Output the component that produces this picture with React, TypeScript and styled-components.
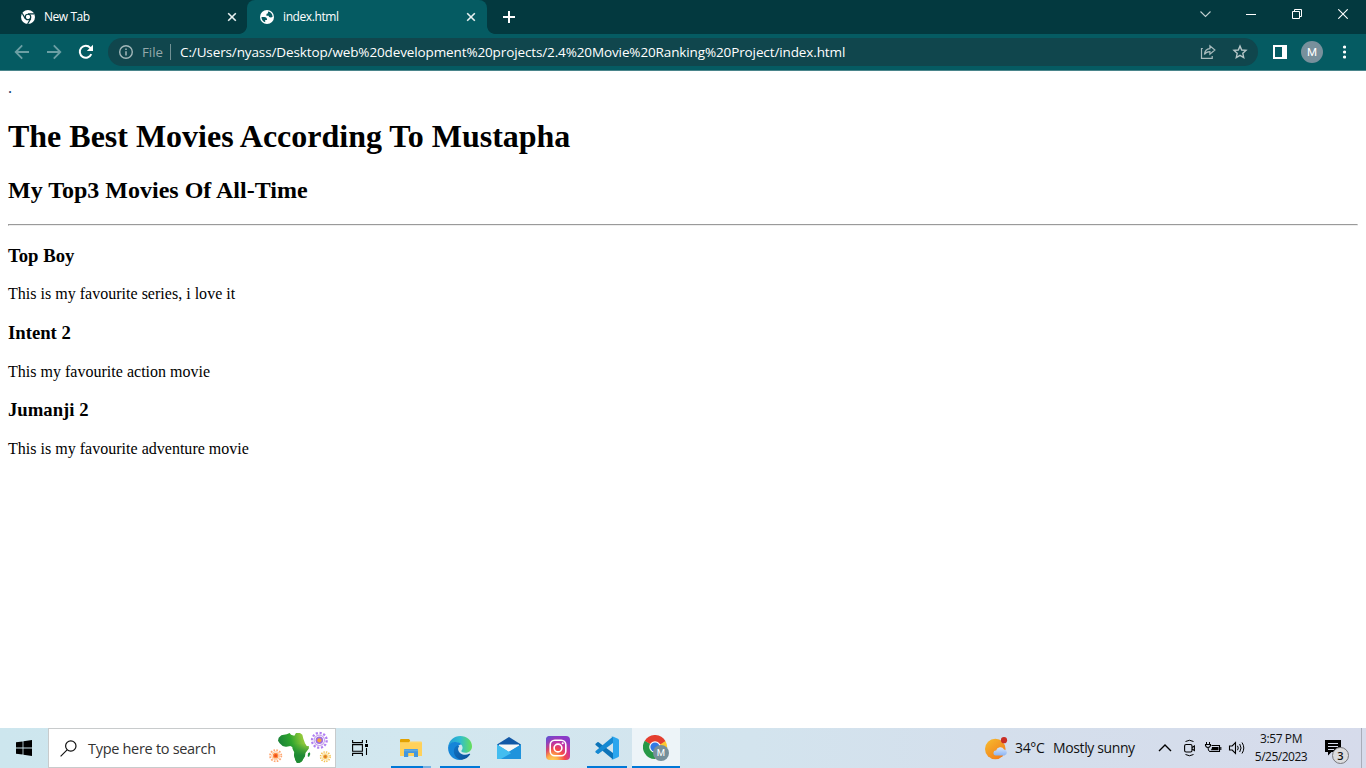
import React from 'react';
import styled, { createGlobalStyle } from 'styled-components';

const GlobalStyle = createGlobalStyle`
  html, body { margin: 0; padding: 0; background: #fff; overflow: hidden; }
  svg { display: block; flex: none; }
`;

const UI_FONT = `'Open Sans', 'Noto Sans', sans-serif`;

const Screen = styled.div`
  width: 1366px;
  height: 768px;
  display: flex;
  flex-direction: column;
  overflow: hidden;
`;

const Label = styled.span<{ $size: number; $spacing?: number; $color?: string; $width?: number; $weight?: number }>`
  font-family: ${UI_FONT};
  font-size: ${p => p.$size}px;
  letter-spacing: ${p => p.$spacing ?? 0}px;
  color: ${p => p.$color ?? '#fff'};
  font-weight: ${p => p.$weight ?? 400};
  width: ${p => (p.$width ? `${p.$width}px` : 'auto')};
  flex: none;
  white-space: nowrap;
  line-height: 18px;
`;

/* Browser chrome */

const TabStrip = styled.div`
  height: 34px;
  display: flex;
  background: #03393f;
`;

const Tab = styled.div<{ $width: number; $padLeft: number; $active?: boolean }>`
  position: relative;
  box-sizing: border-box;
  width: ${p => p.$width}px;
  height: 34px;
  padding: 0 ${p => (p.$active ? 11 : 10)}px 0 ${p => p.$padLeft}px;
  display: flex;
  align-items: center;
  background: ${p => (p.$active ? '#055b62' : 'transparent')};
  border-radius: 8px 8px 0 0;

  &::before,
  &::after {
    content: '';
    display: ${p => (p.$active ? 'block' : 'none')};
    position: absolute;
    bottom: 0;
    width: 8px;
    height: 8px;
  }
  &::before {
    left: -8px;
    background: radial-gradient(circle at 0 0, transparent 7.5px, #055b62 8.2px);
  }
  &::after {
    right: -8px;
    background: radial-gradient(circle at 8px 0, transparent 7.5px, #055b62 8.2px);
  }
`;

const TabTitle = styled.div<{ $gap: number }>`
  flex: 1;
  display: flex;
  padding-left: ${p => p.$gap}px;
`;

const NewTabButton = styled.div`
  width: 44px;
  height: 34px;
  display: flex;
  align-items: center;
  justify-content: center;
`;

const WindowControls = styled.div`
  margin-left: auto;
  height: 28px;
  display: flex;
`;

const WindowButton = styled.div`
  width: 46px;
  height: 28px;
  display: flex;
  align-items: center;
  justify-content: center;
`;

const Toolbar = styled.div`
  box-sizing: border-box;
  height: 37px;
  display: flex;
  align-items: center;
  background: #055b62;
  border-bottom: 1px solid #4a858b;
`;

const NavButton = styled.div<{ $width: number }>`
  width: ${p => p.$width}px;
  height: 36px;
  flex: none;
  display: flex;
  align-items: center;
  justify-content: center;
`;

const Gap = styled.div<{ $width: number }>`
  width: ${p => p.$width}px;
  flex: none;
`;

const Omnibox = styled.div`
  box-sizing: border-box;
  width: 1150px;
  height: 28px;
  padding: 0 10px 0 11px;
  display: flex;
  align-items: center;
  border-radius: 14px;
  background: #10464d;
`;

const OmniDivider = styled.div`
  width: 1px;
  height: 16px;
  margin: 0 9px 0 0;
  background: #719194;
`;

const OmniActions = styled.div`
  margin-left: auto;
  display: flex;
  gap: 16px;
`;

const Avatar = styled.div`
  width: 22px;
  height: 22px;
  flex: none;
  border-radius: 50%;
  display: flex;
  align-items: center;
  justify-content: center;
  background: #78909c;
  color: #fff;
  font: 400 11.5px Roboto, sans-serif;
`;

/* Document */

const Page = styled.main`
  flex: 1;
  min-height: 0;
  padding: 8px;
  background: #fff;
  color: #000;
  font-family: 'Liberation Serif', serif;
  font-size: 16px;
  overflow: hidden;
`;

const Dot = styled.div`
  height: 18px;
  line-height: 18px;
  color: #123a6b;
`;

const Title = styled.h1`
  margin: 21.44px 0;
  font-size: 32px;
  letter-spacing: -0.01px;
`;

const Subtitle = styled.h2`
  margin: 19.92px 0;
  font-size: 24px;
`;

const Rule = styled.hr`
  margin: 0;
  border: 1px solid;
  border-color: #9a9a9a #eeeeee #eeeeee #9a9a9a;
`;

const MovieName = styled.h3`
  margin: 18.72px 0;
  font-size: 18.72px;
`;

const MovieNote = styled.p`
  margin: 16px 0;
  letter-spacing: 0.015px;
`;

/* Taskbar */

const Taskbar = styled.footer`
  height: 40px;
  flex: none;
  display: flex;
  background: linear-gradient(90deg, #cde6ee 0%, #d2e7ef 30%, #d3e4ee 55%, #d4dfec 72%, #d6dbeb 100%);
`;

const TaskSlot = styled.div<{ $width: number; $active?: boolean }>`
  box-sizing: border-box;
  position: relative;
  width: ${p => p.$width}px;
  height: 40px;
  margin-left: ${p => (p.$active ? 1 : 0)}px;
  flex: none;
  display: flex;
  align-items: center;
  justify-content: center;
  background: ${p => (p.$active ? '#edf4f8' : 'transparent')};
`;

const Running = styled.div<{ $width: number; $split?: boolean }>`
  position: absolute;
  bottom: 0;
  width: ${p => p.$width}px;
  height: 2px;
  background: ${p => (p.$split ? 'linear-gradient(90deg, #0078d7 32px, #76b1e3 32px)' : '#0078d7')};
`;

const SearchBox = styled.div`
  box-sizing: border-box;
  width: 288px;
  height: 40px;
  padding: 0 2px 0 11px;
  display: flex;
  align-items: center;
  border: 1px solid #c8cbcc;
  background: #fff;
`;

const SearchHint = styled.div`
  display: flex;
  padding: 2px 0 0 11px;
`;

const SearchArt = styled.div`
  margin-left: auto;
`;

const Apps = styled.div`
  margin-left: 2px;
  display: flex;
`;

const Tray = styled.div`
  margin-left: auto;
  display: flex;
  align-items: center;
`;

const Weather = styled.div`
  width: 173px;
  display: flex;
  align-items: center;
`;

const TrayIcons = styled.div`
  width: 91px;
  display: flex;
  align-items: center;
`;

const Clock = styled.div`
  width: 64px;
  height: 36px;
  display: flex;
  flex-direction: column;
  align-items: center;
`;

const Notifications = styled.div`
  position: relative;
  width: 48px;
  height: 40px;
`;

const Bubble = styled.div`
  padding: 12px 0 0 11px;
`;

const Badge = styled.div`
  position: absolute;
  left: 19px;
  top: 19px;
  box-sizing: border-box;
  width: 17px;
  height: 17px;
  border: 1px solid #77777b;
  border-radius: 50%;
  display: flex;
  align-items: center;
  justify-content: center;
  background: #dcdcde;
  color: #111;
  font: 600 11px/14px ${UI_FONT};
`;

const ShowDesktop = styled.div`
  box-sizing: border-box;
  width: 5px;
  height: 40px;
  border-left: 1px solid #a9adb9;
`;

/* Icons */

const ChromeMono = () => (
  <svg width="14" height="14" viewBox="0 0 14 14">
    <circle cx="7" cy="7" r="7" fill="#fff" />
    <circle cx="7" cy="7" r="2.75" fill="none" stroke="#03393f" strokeWidth="1.2" />
    <path d="M7 3.900h6.200M4.300 8.600 1.200 3.300M9.700 8.600 6.600 14" fill="none" stroke="#03393f" strokeWidth="1.2" />
  </svg>
);

const Globe = () => (
  <svg width="14" height="14" viewBox="0 0 14 14">
    <circle cx="7" cy="7" r="7" fill="#fff" />
    <path
      d="M1.500 7h2.700c2 0 3 .9 2.800 3H5.200v2.300A5.600 5.600 0 0 1 1.500 7zM8 1.500a5.600 5.600 0 0 1 4.600 5.200c-.5.500-1 .7-1.900.7-1.300 0-2-.5-2-1.700H6.400c-.2-1.700.4-2.500 1.700-2.500 0-.7-.3-1-.1-1.700z"
      fill="#055b62"
    />
  </svg>
);

const CloseGlyph = () => (
  <svg width="10" height="10" viewBox="0 0 10 10">
    <path d="M1.200 1.200 8.800 8.800M8.800 1.200 1.200 8.800" stroke="#e9f1f1" strokeWidth="1.600" />
  </svg>
);

const Plus = () => (
  <svg width="12" height="12" viewBox="0 0 12 12">
    <path d="M6 0v12M0 6h12" stroke="#fff" strokeWidth="2" />
  </svg>
);

const Arrow = ({ flip }: { flip?: boolean }) => (
  <svg width="16" height="16" viewBox="0 0 16 16">
    <path
      transform={flip ? 'translate(16 0) scale(-1 1)' : undefined}
      d="M15 8H2M8.200 1.400 1.700 8l6.500 6.600"
      fill="none"
      stroke="#6c9fa4"
      strokeWidth="1.800"
    />
  </svg>
);

const Reload = () => (
  <svg width="16" height="16" viewBox="0 0 16 16">
    <path d="M13.300 10.200A6 6 0 1 1 12.300 3.800L14 5.500" fill="none" stroke="#fff" strokeWidth="2" />
    <path d="M15 .8V7H8.800z" fill="#fff" />
  </svg>
);

const Info = () => (
  <svg width="14" height="14" viewBox="0 0 14 14">
    <circle cx="7" cy="7" r="6.300" fill="none" stroke="#a3b8ba" strokeWidth="1.400" />
    <path d="M7 6.200v4.300M7 3.400v1.500" stroke="#a3b8ba" strokeWidth="1.500" />
  </svg>
);

const Share = () => (
  <svg width="16" height="15" viewBox="0 0 16 15" fill="none" stroke="#a9bbbd" strokeWidth="1.200">
    <path d="M2.800 4.500H1.500v9.800h10.700V12" />
    <path d="M4.400 10.500c.4-3.800 2.400-5.700 5.500-5.900V1.700l5 4.300-5 4.300V7.700c-2.500 0-4.200.8-5.500 2.800z" />
  </svg>
);

const Star = () => (
  <svg width="16" height="16" viewBox="0 0 16 16">
    <path
      d="M8 2.100 9.700 6l4.300.4-3.200 2.900.9 4.200L8 11.300l-3.700 2.200.9-4.200L2 6.400 6.300 6z"
      fill="none"
      stroke="#b7c6c8"
      strokeWidth="1.400"
    />
  </svg>
);

const SidePanel = () => (
  <svg width="14" height="14" viewBox="0 0 14 14">
    <path d="M0 0h14v14H0zM2 2v10h7V2z" fill="#fff" fillRule="evenodd" />
  </svg>
);

const Kebab = () => (
  <svg width="4" height="14" viewBox="0 0 4 14" fill="#fff">
    <circle cx="2.500" cy="2" r="1.600" />
    <circle cx="2.500" cy="7" r="1.600" />
    <circle cx="2.500" cy="12" r="1.600" />
  </svg>
);

const ChevronDown = () => (
  <svg width="11" height="8" viewBox="0 0 11 8">
    <path d="M.5 1.500l5 5 5-5" fill="none" stroke="#c2d0d1" strokeWidth="1.100" />
  </svg>
);

const Minimize = () => (
  <svg width="10" height="10" viewBox="0 0 10 10">
    <path d="M0 5.500h10" stroke="#fff" />
  </svg>
);

const Restore = () => (
  <svg width="10" height="10" viewBox="0 0 10 10" fill="none" stroke="#fff">
    <path d="M.5 2.500h7v7h-7zM2.500 2.500v-2h7v7h-2" />
  </svg>
);

const CloseWindow = () => (
  <svg width="10" height="10" viewBox="0 0 10 10">
    <path d="M.3.300l9.400 9.400M9.700.300l-9.400 9.400" stroke="#fff" strokeWidth="1.100" />
  </svg>
);

const WindowsLogo = () => (
  <svg width="16" height="16" viewBox="0 0 16 16" fill="#000">
    <path d="M0 2.300 6.600 1.400v6.200H0zM7.400 1.300 16 0v7.600H7.400zM0 8.400h6.600v6.200L0 13.700zM7.400 8.400H16V16l-8.600-1.300z" />
  </svg>
);

const Magnifier = () => (
  <svg width="17" height="17" viewBox="0 0 17 17" fill="none" stroke="#111" strokeWidth="1.200">
    <circle cx="10.800" cy="6" r="5.200" />
    <path d="M7.100 9.800.6 16.300" />
  </svg>
);

type FlowerProps = { cx: number; cy: number; r: number; ray: string; petal: string; core: string };

const Flower = ({ cx, cy, r, ray, petal, core }: FlowerProps) => (
  <g>
    <circle cx={cx} cy={cy} r={r * 0.85} fill="none" stroke={ray} strokeWidth={r * 0.26} strokeDasharray={`${r * 0.25} ${r * 0.195}`} />
    <circle cx={cx} cy={cy} r={r * 0.6} fill="none" stroke={petal} strokeWidth={r * 0.13} opacity=".6" />
    <circle cx={cx} cy={cy} r={r * 0.43} fill={petal} />
    <circle cx={cx} cy={cy} r={r * 0.24} fill={core} />
  </g>
);

const AfricaArt = () => (
  <svg width="66" height="38" viewBox="33 27 198 114">
    <defs>
      <linearGradient id="africa" x1="0" y1="0.5" x2="1" y2="0.2">
        <stop offset="0" stopColor="#157a3a" />
        <stop offset=".45" stopColor="#2fa52e" />
        <stop offset=".8" stopColor="#8fc83a" />
      </linearGradient>
      <linearGradient id="africaShade" x1="0" y1="0" x2="0" y2="1">
        <stop offset=".35" stopColor="#1f8f35" stopOpacity="0" />
        <stop offset=".75" stopColor="#1f8a34" />
      </linearGradient>
    </defs>
    {['url(#africa)', 'url(#africaShade)'].map(fill => (
      <path
        key={fill}
        fill={fill}
        d="M76 46l16-3 9-4 4 5 10 3 5-8h12l7 5 3 12 5 14 5 8 7 1-1 7-10 13-1 10-5 7-4 8-7 4-8 1-5-9-4-14 1-9-5-10-1-6-6-3-13 2-10-2-9-8-5-8 2-9z"
      />
    ))}
    <path d="M156 100l5-3 2 5-4 9-4-2z" fill="#1f9138" />
    <Flower cx={59} cy={107} r={20} ray="#ffa56f" petal="#ff9142" core="#f0501e" />
    <Flower cx={190} cy={61} r={26} ray="#b07ff2" petal="#a06be0" core="#f5a33c" />
    <Flower cx={208} cy={110} r={17} ray="#f3c14c" petal="#f6b93a" core="#d9782c" />
  </svg>
);

const TaskView = () => (
  <svg width="16" height="16" viewBox="0 0 16 16" fill="none" stroke="#000" strokeWidth="1.100">
    <path d="M.6 0v2.600h9.800V0M.6 16v-2.600h9.800V16M.6 4.600h9.800v6.700H.6zM14.500 0v3M14.500 8v7" />
    <path d="M13 4h3v3h-3z" fill="#000" stroke="none" />
  </svg>
);

const Explorer = () => (
  <svg width="22" height="19" viewBox="0 0 22 19">
    <path d="M0 2h10v.5h11a1 1 0 0 1 1 1v13.500H0z" fill="#ffd667" />
    <path d="M0 1.200Q0 0 1 0h8l1.200 1.500L9 3.300H0z" fill="#e2a100" />
    <path d="M0 4h22v13H0z" fill="#ffd15a" />
    <path d="M4 11q0-1 1-1h12q1 0 1 1v7h-4v-4H8.200v4H4z" fill="#4397dd" />
    <path d="M4 10.500h14v1.800H4z" fill="#5fa9df" />
  </svg>
);

const Edge = () => (
  <svg width="24" height="24" viewBox="0 0 24 24">
    <defs>
      <linearGradient id="edgeTop" x1="0" y1=".5" x2="1" y2=".5">
        <stop offset="0" stopColor="#229ad8" />
        <stop offset=".5" stopColor="#30bdcf" />
        <stop offset="1" stopColor="#67df58" />
      </linearGradient>
      <linearGradient id="edgeLow" x1="0" y1="0" x2="1" y2="1">
        <stop offset="0" stopColor="#1075c5" />
        <stop offset="1" stopColor="#0c4f98" />
      </linearGradient>
    </defs>
    <path d="M.2 10.600C1 4.500 6 0 12.200 0 19 0 24 4.700 24 10.200c0 3.900-2.900 6.600-6.600 6.600-2.400 0-4.100-.8-4.100-1.700 0-.6 1.300-1.100 1.300-3.300 0-3-3-5.300-6.700-5.300-3.500 0-6.300 1.700-7.700 4.100z" fill="url(#edgeTop)" />
    <path d="M.1 11.500C.4 8 4 6 7.700 6c2.600 0 4.800 1 5.900 2.400-3 0-4.900 2.200-4.900 5.200 0 4.700 4 8.200 8.800 7.700C15.700 23.200 13.700 24 11.500 24 5 24-.2 18.500.1 11.500z" fill="#1585d8" />
    <path d="M9.600 9.200c-2.400 1-3.800 3.300-3.800 6 0 4.700 3.800 8.300 8.200 8.500 3.500-.7 6.500-2.600 8.100-5.300.3-.5-.2-.8-.7-.6C16.700 20.100 11.200 18.300 10.200 14c-.3-1.500.2-2.800 1-3.700-.4-.6-.9-1-1.600-1.100z" fill="url(#edgeLow)" />
  </svg>
);

const Mail = () => (
  <svg width="24" height="23" viewBox="0 0 24 23">
    <path d="M0 7.500 12 0l12 7.500-2 5H2z" fill="#1258a6" />
    <path d="M2 7.500h20V14l-9 4-11-5z" fill="#f7f7f7" />
    <path d="M0 7.500l12 7.500L24 7.500V22H0z" fill="#36a9e6" />
    <path d="M0 22 24 7.500V22z" fill="#1f93dc" />
    <path d="M0 7.500l14 8.700L4 22H0z" fill="#43bdf0" />
  </svg>
);

const Instagram = () => (
  <svg width="24" height="24" viewBox="0 0 24 24">
    <defs>
      <radialGradient id="igWarm" cx=".27" cy="1.050" r="1.050">
        <stop offset="0" stopColor="#ffd65c" />
        <stop offset=".22" stopColor="#fdb14a" />
        <stop offset=".5" stopColor="#f5484a" />
        <stop offset=".75" stopColor="#c932a0" />
        <stop offset="1" stopColor="#8a3ac8" />
      </radialGradient>
      <linearGradient id="igCool" x1="0" y1="0" x2=".45" y2=".35">
        <stop offset="0" stopColor="#4f5bd5" />
        <stop offset="1" stopColor="#a035b8" stopOpacity="0" />
      </linearGradient>
    </defs>
    <rect width="24" height="24" rx="4" fill="url(#igWarm)" />
    <rect width="24" height="24" rx="4" fill="url(#igCool)" />
    <g fill="none" stroke="#fff" strokeWidth="1.600">
      <rect x="4.200" y="4.200" width="15.600" height="15.600" rx="4.600" />
      <circle cx="12" cy="12" r="3.900" />
    </g>
    <circle cx="16.700" cy="7.300" r="1.050" fill="#fff" />
  </svg>
);

const VSCode = () => (
  <svg width="24" height="24" viewBox="0 0 24 24">
    <path d="M.6 7.800 2.400 6.200q.6-.4 1.200 0L18 17v6.600L.6 9q-.6-.6 0-1.200z" fill="#0c73b8" />
    <path d="M.6 16.200l1.800 1.600q.6.400 1.200 0L18 7V.4L.6 15q-.6.600 0 1.200z" fill="#1689d2" />
    <path d="M17.300.2 23 2.800q1 .5 1 1.500v15.400q0 1-1 1.500l-5.700 2.600q-1 .3-1.500-.3 2.200.6 2.200-1.300V1.800q0-1.900-2.200-1.300.5-.6 1.500-.3z" fill="#2ba6ee" />
  </svg>
);

const ChromeBadged = () => (
  <svg width="26" height="26" viewBox="0 0 26 26">
    <path d="M12 12 1.600 6A12 12 0 0 1 22.400 6z" fill="#e43e2f" />
    <path d="M12 12 22.400 6A12 12 0 0 1 12 24z" fill="#fdc82f" />
    <path d="M12 12v12A12 12 0 0 1 1.600 6z" fill="#279847" />
    <path d="M12 6h10.400L12 13z" fill="#e43e2f" />
    <path d="M6.800 15 1.600 6 12 12z" fill="#279847" />
    <path d="M17.200 15 12 24V12z" fill="#fdc82f" />
    <circle cx="12" cy="12" r="5.800" fill="#fff" />
    <circle cx="12" cy="12" r="4.600" fill="#3279e6" />
    <circle cx="18" cy="18" r="8" fill="#76909b" />
    <text x="18" y="21.400" textAnchor="middle" fontFamily="Roboto, sans-serif" fontWeight="400" fontSize="9.500" fill="#fff">M</text>
  </svg>
);

const SunCloud = () => (
  <svg width="23" height="23" viewBox="0 0 23 23">
    <defs>
      <linearGradient id="sun" x1=".1" y1=".1" x2=".8" y2="1">
        <stop offset="0" stopColor="#f6b62c" />
        <stop offset="1" stopColor="#f27a1b" />
      </linearGradient>
      <linearGradient id="cloud" x1="0" y1="0" x2="0" y2="1">
        <stop offset="0" stopColor="#d9e8fc" />
        <stop offset="1" stopColor="#8db5f3" />
      </linearGradient>
    </defs>
    <circle cx="10.300" cy="12" r="10.300" fill="url(#sun)" />
    <path d="M10.800 18.400a2.500 2.500 0 0 1 .3-5 4.300 4.300 0 0 1 8-.9 3 3 0 0 1 .5 5.900z" fill="url(#cloud)" />
    <circle cx="19" cy="3.200" r="3.100" fill="#c92e25" />
  </svg>
);

/* Chevron, meet-now, charging battery and volume, drawn on one strip. */
const TrayGlyphs = () => (
  <svg width="88" height="20" viewBox="0 0 88 20" fill="none" stroke="#000" strokeWidth="1.100">
    <path d="M1 13l6-6 6 6" strokeWidth="1.400" />
    <path d="M27.500 3.500q4-2.500 8 0M27.500 16.500q4 2.500 8 0" strokeWidth="1" />
    <rect x="26.600" y="6.500" width="7.400" height="7.500" rx="1.500" />
    <path d="M34 9.500l2.400-1.500v4.500L34 11" />
    <path d="M53.500 7.500h8v6h-10" />
    <path d="M54 9h6.500v3.200H52.500q1.500-1 1.500-3.200z" fill="#000" stroke="none" />
    <path d="M62.800 9v3" />
    <path d="M48.500 4v2.500M51.500 4v2.500M50 9.500q0 4 2 4" strokeWidth="1" />
    <path d="M47.500 6.500h5v1q-.5 2-2.500 2t-2.500-2z" />
    <path d="M71.500 8h2.700l3.300-3.300v10.600L74.200 12h-2.700z" />
    <path d="M79.500 7.800q1.500 2.200 0 4.400M81.700 6q2.700 4 0 8M84 4.500q3.600 5.500 0 11" strokeWidth="1" />
  </svg>
);

const MessageGlyph = () => (
  <svg width="17" height="17" viewBox="0 0 17 17">
    <path d="M1 0h16v12H7.500L4 15.500V12H1z" fill="#000" />
    <path d="M4 3.500h10M4 6.500h10M4 9.500h6" stroke="#d6dbea" />
  </svg>
);

const movies = [
  { name: 'Top Boy', note: 'This is my favourite series, i love it' },
  { name: 'Intent 2', note: 'This my favourite action movie' },
  { name: 'Jumanji 2', note: 'This is my favourite adventure movie' },
];

const apps = [
  { id: 'explorer', icon: <Explorer />, running: 40, split: true },
  { id: 'edge', icon: <Edge />, running: 40 },
  { id: 'mail', icon: <Mail /> },
  { id: 'instagram', icon: <Instagram /> },
  { id: 'vscode', icon: <VSCode />, running: 40 },
];

export default function App() {
  return (
    <Screen>
      <GlobalStyle />
      <TabStrip>
        <Tab $width={247} $padLeft={21}>
          <ChromeMono />
          <TabTitle $gap={9}><Label $size={12} $spacing={-0.45}>New Tab</Label></TabTitle>
          <CloseGlyph />
        </Tab>
        <Tab $width={240} $padLeft={13} $active>
          <Globe />
          <TabTitle $gap={9}><Label $size={12} $spacing={-0.4}>index.html</Label></TabTitle>
          <CloseGlyph />
        </Tab>
        <NewTabButton><Plus /></NewTabButton>
        <WindowControls>
          <WindowButton><ChevronDown /></WindowButton>
          <WindowButton><Minimize /></WindowButton>
          <WindowButton><Restore /></WindowButton>
          <WindowButton><CloseWindow /></WindowButton>
        </WindowControls>
      </TabStrip>
      <Toolbar>
        <NavButton $width={44}><Arrow /></NavButton>
        <NavButton $width={20}><Arrow flip /></NavButton>
        <NavButton $width={44}><Reload /></NavButton>
        <Omnibox>
          <Info />
          <Gap $width={9} />
          <Label $size={13.3} $color="#94a9ab" $width={28}>File</Label>
          <OmniDivider />
          <Label $size={13.5} $spacing={-0.12}>
            C:/Users/nyass/Desktop/web%20development%20projects/2.4%20Movie%20Ranking%20Project/index.html
          </Label>
          <OmniActions>
            <Share />
            <Star />
          </OmniActions>
        </Omnibox>
        <NavButton $width={44}><SidePanel /></NavButton>
        <NavButton $width={20}><Avatar>M</Avatar></NavButton>
        <NavButton $width={44}><Kebab /></NavButton>
      </Toolbar>
      <Page>
        <Dot>.</Dot>
        <Title>The Best Movies According To Mustapha</Title>
        <Subtitle>My Top3 Movies Of All-Time</Subtitle>
        <Rule />
        {movies.map(movie => (
          <React.Fragment key={movie.name}>
            <MovieName>{movie.name}</MovieName>
            <MovieNote>{movie.note}</MovieNote>
          </React.Fragment>
        ))}
      </Page>
      <Taskbar>
        <TaskSlot $width={48}><WindowsLogo /></TaskSlot>
        <SearchBox>
          <Magnifier />
          <SearchHint><Label $size={14.5} $spacing={-0.3} $color="#333">Type here to search</Label></SearchHint>
          <SearchArt><AfricaArt /></SearchArt>
        </SearchBox>
        <TaskSlot $width={48}><TaskView /></TaskSlot>
        <Apps>
          {apps.map(app => (
            <TaskSlot key={app.id} $width={49}>
              {app.icon}
              {app.running && <Running $width={app.running} $split={app.split} />}
            </TaskSlot>
          ))}
          <TaskSlot $width={48} $active>
            <ChromeBadged />
            <Running $width={48} />
          </TaskSlot>
        </Apps>
        <Tray>
          <Weather>
            <SunCloud />
            <Gap $width={7} />
            <Label $size={14} $spacing={-0.35} $color="#111" $width={38}>34°C</Label>
            <Label $size={14} $spacing={-0.38} $color="#111">Mostly sunny</Label>
          </Weather>
          <TrayIcons><TrayGlyphs /></TrayIcons>
          <Clock>
            <Label $size={12} $spacing={-0.4} $color="#111">3:57 PM</Label>
            <Label $size={12} $spacing={-0.5} $color="#111">5/25/2023</Label>
          </Clock>
          <Notifications>
            <Bubble><MessageGlyph /></Bubble>
            <Badge>3</Badge>
          </Notifications>
          <ShowDesktop />
        </Tray>
      </Taskbar>
    </Screen>
  );
}
